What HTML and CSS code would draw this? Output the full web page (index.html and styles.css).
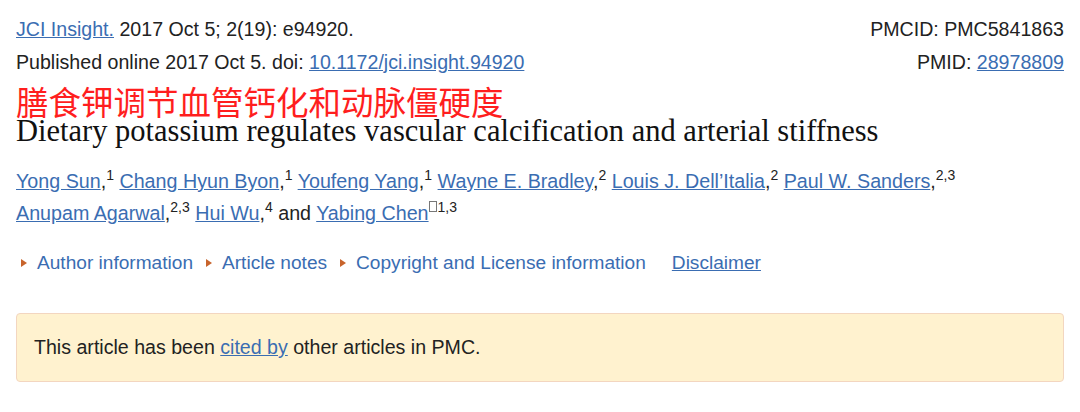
FILE: index.html
```html
<!DOCTYPE html>
<html lang="en">
<head>
<meta charset="utf-8">
<link rel="stylesheet" href="styles.css">
</head>
<body>
<div class="page">
  <div class="meta">
    <div class="meta-left">
      <div class="meta-line"><a href="#">JCI Insight.</a> 2017 Oct 5; 2(19): e94920.</div>
      <div class="meta-line">Published online 2017 Oct 5. doi: <a href="#">10.1172/jci.insight.94920</a></div>
    </div>
    <div class="meta-right">
      <div class="meta-line">PMCID: PMC5841863</div>
      <div class="meta-line">PMID: <a href="#">28978809</a></div>
    </div>
  </div>
  <div class="cn-title">膳食钾调节血管钙化和动脉僵硬度</div>
  <h1 class="title">Dietary potassium regulates vascular calcification and arterial stiffness</h1>
  <div class="authors">
    <div class="author-line"><a href="#">Yong Sun</a>,<sup>1</sup> <a href="#">Chang Hyun Byon</a>,<sup>1</sup> <a href="#">Youfeng Yang</a>,<sup>1</sup> <a href="#">Wayne E. Bradley</a>,<sup>2</sup> <a href="#">Louis J. Dell’Italia</a>,<sup>2</sup> <a href="#">Paul W. Sanders</a>,<sup>2,3</sup></div>
    <div class="author-line"><a href="#">Anupam Agarwal</a>,<sup>2,3</sup> <a href="#">Hui Wu</a>,<sup>4</sup> and <a href="#">Yabing Chen</a><sup><span class="tofu"></span>1,3</sup></div>
  </div>
  <nav class="nav">
    <span class="nav-item"><span class="tri"></span>Author information</span>
    <span class="nav-item"><span class="tri"></span>Article notes</span>
    <span class="nav-item"><span class="tri"></span>Copyright and License information</span>
    <a class="nav-link" href="#">Disclaimer</a>
  </nav>
  <div class="notice">This article has been <a href="#">cited by</a> other articles in PMC.</div>
</div>
</body>
</html>
```

FILE: styles.css
```css
html, body {
  margin: 0;
  padding: 0;
  background: #fff;
}
body {
  font-family: "Liberation Sans", Arial, sans-serif;
  font-size: 19.6px;
  color: #222;
}
a {
  color: #3a6db2;
  text-decoration: underline;
}
.page {
  padding: 13px 16px 0 16px;
}
.meta {
  display: flex;
  justify-content: space-between;
}
.meta-right {
  text-align: right;
}
.meta-line {
  line-height: 33px;
  height: 33px;
}
.cn-title {
  font-family: "Noto Sans CJK SC", sans-serif;
  color: #ff1e1e;
  font-size: 32.5px;
  line-height: 36px;
  margin-top: 4px;
}
.title {
  font-family: "Liberation Serif", "Times New Roman", serif;
  font-weight: normal;
  font-size: 30.5px;
  line-height: 24px;
  margin: 0;
  color: #111;
}
.authors {
  margin-top: 22px;
  font-size: 19.7px;
}
.author-line {
  line-height: 32px;
  height: 32px;
}
sup {
  font-size: 14px;
  line-height: 0;
  vertical-align: 8px;
}
.tofu {
  display: inline-block;
  width: 6px;
  height: 9px;
  border: 1px solid #777;
  margin-right: 1px;
  vertical-align: 0;
}
.nav {
  display: flex;
  align-items: center;
  margin-top: 18px;
  height: 32px;
  color: #3a6db2;
  font-size: 19.1px;
}
.nav-item {
  display: flex;
  align-items: center;
  margin-right: 8px;
}
.tri {
  width: 0;
  height: 0;
  border-top: 4px solid transparent;
  border-bottom: 4px solid transparent;
  border-left: 6px solid #c8642c;
  margin-left: 5px;
  margin-right: 10px;
}
.nav-link {
  margin-left: 18px;
}
.notice {
  margin-top: 34px;
  background: #fff2cf;
  border: 1px solid #f3d6c0;
  border-radius: 4px;
  padding: 0 17px;
  height: 67px;
  line-height: 67px;
  color: #222;
}
```
